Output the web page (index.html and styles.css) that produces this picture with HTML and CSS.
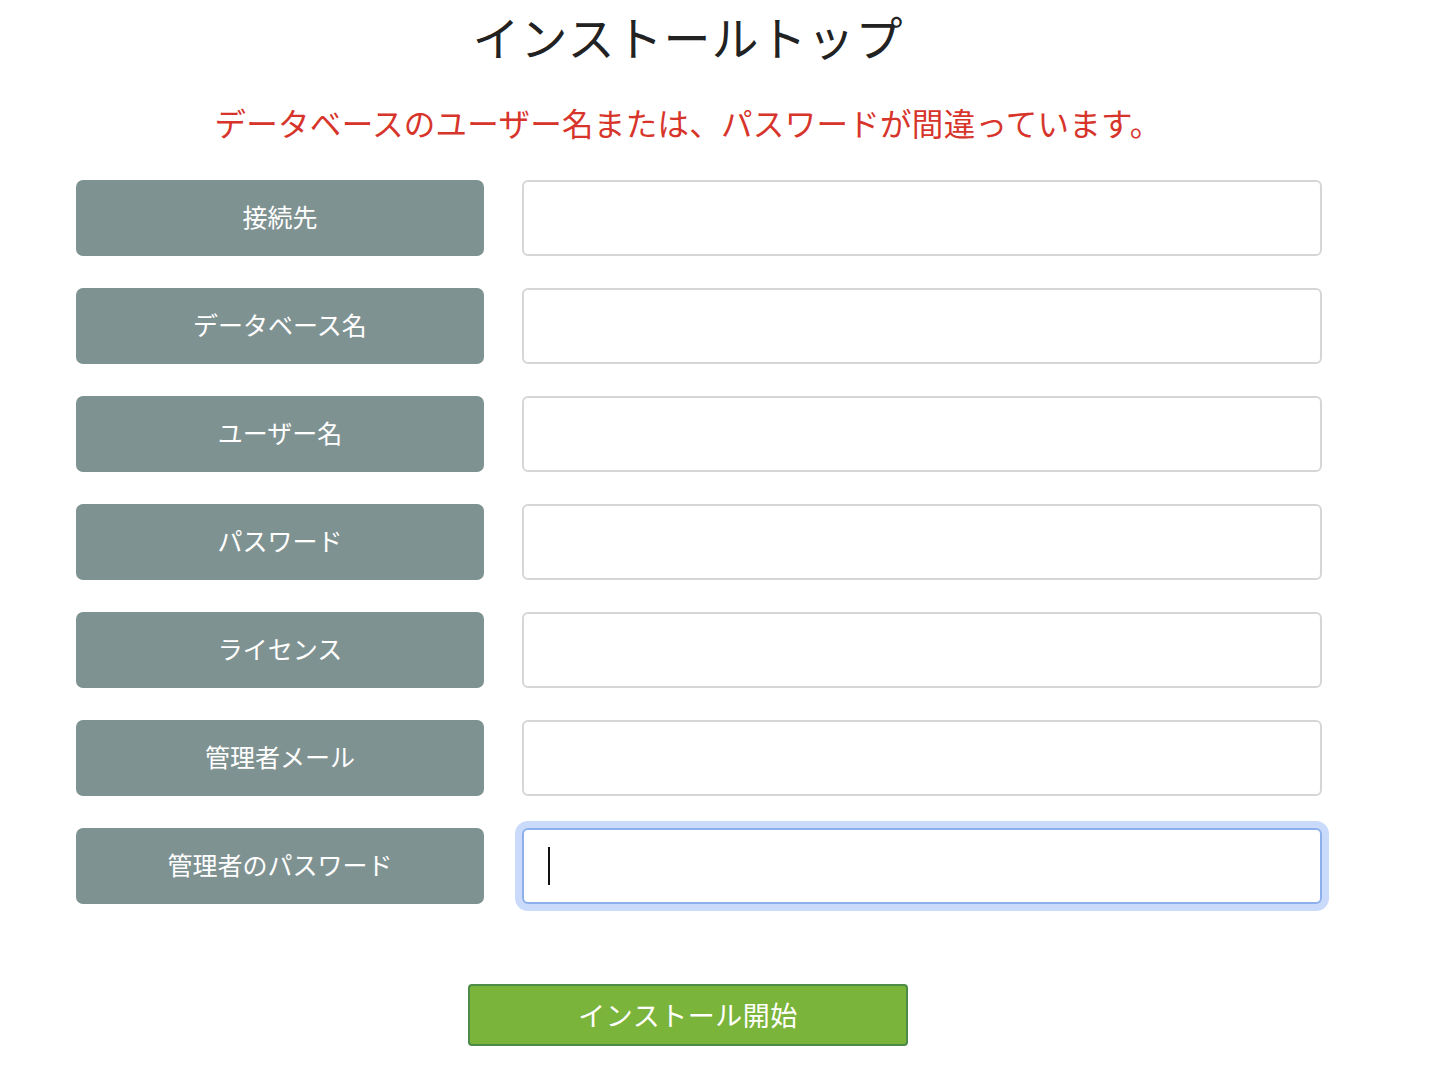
FILE: index.html
```html
<!DOCTYPE html>
<html lang="ja">
<head>
    <meta charset="utf-8">
    <title>インストールトップ</title>
    <link rel="stylesheet" href="styles.css">
</head>
<body>
    <div class="page">
        <h1>インストールトップ</h1>

        <p class="error">データベースのユーザー名または、パスワードが間違っています。</p>

        <!-- Setup form -->
        <form class="install-form">
            <label class="field-label" for="host">接続先</label>
            <input class="field-input" type="text" id="host">

            <label class="field-label" for="dbname">データベース名</label>
            <input class="field-input" type="text" id="dbname">

            <label class="field-label" for="dbuser">ユーザー名</label>
            <input class="field-input" type="text" id="dbuser">

            <label class="field-label" for="dbpass">パスワード</label>
            <input class="field-input" type="password" id="dbpass">

            <label class="field-label" for="license">ライセンス</label>
            <input class="field-input" type="text" id="license">

            <label class="field-label" for="adminmail">管理者メール</label>
            <input class="field-input" type="text" id="adminmail">

            <label class="field-label" for="adminpass">管理者のパスワード</label>
            <div class="input-wrap is-focused">
                <input class="field-input" type="password" id="adminpass">
            </div>
        </form>

        <div class="actions">
            <button type="button" class="btn-install">インストール開始</button>
        </div>
    </div>
</body>
</html>
```

FILE: styles.css
```css
/* Base page */
body {
    margin: 0;
    background-color: #ffffff;
    font-family: "Noto Sans CJK JP", "Noto Sans", sans-serif;
    color: #222222;
}

.page {
    width: 1376px;
}

/* Heading */
h1 {
    margin: 0;
    padding-top: 4px;
    text-align: center;
    font-size: 47px;
    font-weight: 400;
    line-height: 64px;
    letter-spacing: 1px;
}

/* Error message */
.error {
    margin: 32px 0 0;
    text-align: center;
    color: #d7352b;
    font-size: 31.5px;
    line-height: 44px;
    letter-spacing: 0.3px;
}

/* Two column form: labels left, inputs right */
.install-form {
    display: grid;
    grid-template-columns: 408px 800px;
    column-gap: 38px;
    row-gap: 32px;
    margin: 36px 0 0 76px;
}

.field-label {
    box-sizing: border-box;
    display: flex;
    align-items: center;
    justify-content: center;
    height: 76px;
    padding-bottom: 4px;
    background-color: #7f9292;
    border-radius: 7px;
    color: #ffffff;
    font-size: 25px;
}

.field-input {
    box-sizing: border-box;
    width: 800px;
    height: 76px;
    margin: 0;
    border: 2px solid #d6d6d6;
    border-radius: 6px;
    background-color: #ffffff;
    font-size: 24px;
    outline: none;
}

/* Focused field look */
.input-wrap {
    position: relative;
}

.is-focused .field-input {
    border-color: #8db0ec;
    box-shadow: 0 0 0 7px #cadafa;
}

.is-focused::after {
    content: "";
    position: absolute;
    left: 26px;
    top: 19px;
    width: 2px;
    height: 38px;
    background-color: #111111;
}

/* Submit button */
.actions {
    display: flex;
    justify-content: center;
    margin-top: 80px;
}

.btn-install {
    width: 440px;
    height: 62px;
    padding-bottom: 3px;
    background-color: #7bb43a;
    border: 2px solid #4c8c46;
    border-radius: 4px;
    color: #ffffff;
    font-family: "Noto Sans CJK JP", "Noto Sans", sans-serif;
    font-size: 27px;
    letter-spacing: 0.5px;
}
```
